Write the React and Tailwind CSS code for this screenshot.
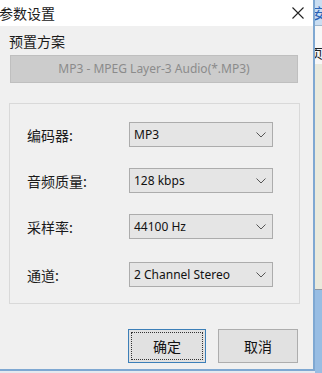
import React from 'react';

const cjk = { fontFamily: '"Noto Sans CJK SC", "Noto Sans", sans-serif' };
const latin = { fontFamily: '"Noto Sans", "Noto Sans CJK SC", sans-serif' };

function Chevron() {
  return (
    <svg width="10" height="6" viewBox="0 0 10 6" className="shrink-0">
      <path d="M0.5 0.5 L5 5 L9.5 0.5" fill="none" stroke="#555" strokeWidth="1" />
    </svg>
  );
}

function Field({ label, value, className }) {
  return (
    <div className={`flex items-center h-[25px] ${className}`}>
      <div className="w-[102px] text-[14px] text-[#1b1b1b] leading-[20px]" style={cjk}>{label}</div>
      <div className="w-[144px] h-[25px] bg-[#e5e5e5] border border-[#acacac] flex items-center justify-between pl-[4px] pr-[6px]">
        <span className="text-[12px] text-[#111]" style={latin}>{value}</span>
        <Chevron />
      </div>
    </div>
  );
}

export default function App() {
  return (
    <div className="w-[322px] h-[373px] overflow-hidden flex bg-[#e6e9ef]">
      {/* dialog */}
      <div className="w-[315px] h-[371px] flex flex-col border-r-2 border-b-2 border-[#7fa8d2] shrink-0">
        <div className="h-[26px] bg-white flex items-center justify-between shrink-0">
          <span className="text-[14px] text-[#202020] -ml-[1px]" style={cjk}>参数设置</span>
          <svg width="12" height="12" viewBox="0 0 12 12" className="mr-[9px]">
            <path d="M0.5 0.5 L11.5 11.5 M11.5 0.5 L0.5 11.5" stroke="#222" strokeWidth="1.1" />
          </svg>
        </div>
        <div className="flex-1 bg-[#f0f0f0] pl-[9px] pt-[5px]">
          <div className="text-[14px] text-[#1b1b1b] leading-[20px]" style={cjk}>预置方案</div>
          <div className="mt-[4px] ml-[1px] w-[288px] h-[28px] bg-[#cccccc] border border-[#bfbfbf] flex items-center justify-center">
            <span className="text-[12px] text-[#8b8b8b]" style={latin}>MP3 - MPEG Layer-3 Audio(*.MP3)</span>
          </div>
          <div className="mt-[20px] w-[291px] h-[201px] border border-[#d9d9d9] pl-[17px] pt-[18px]">
            <Field label="编码器:" value="MP3" />
            <Field label="音频质量:" value="128 kbps" className="mt-[21px]" />
            <Field label="采样率:" value="44100 Hz" className="mt-[21px]" />
            <Field label="通道:" value="2 Channel Stereo" className="mt-[23px]" />
          </div>
          <div className="mt-[25px] flex pl-[119px] gap-[12px]">
            <div className="w-[78px] h-[34px] bg-[#e1e1e1] border border-[#3c7fb8] p-[2px]">
              <div className="w-full h-full border border-dotted border-[#333] flex items-center justify-center">
                <span className="text-[14px] text-[#111]" style={cjk}>确定</span>
              </div>
            </div>
            <div className="w-[80px] h-[34px] bg-[#e1e1e1] border border-[#adadad] flex items-center justify-center">
              <span className="text-[14px] text-[#111]" style={cjk}>取消</span>
            </div>
          </div>
        </div>
      </div>
      {/* background window strip */}
      <div className="flex-1 flex flex-col overflow-hidden">
        <div className="h-[26px] bg-[#c9ddf1] border-b border-[#9fb6cc] overflow-hidden shrink-0">
          <span className="block text-[15px] text-[#2a63b8] leading-[26px] -ml-[3px]" style={cjk}>安</span>
        </div>
        <div className="h-[38px] bg-[#f7f7f7] overflow-hidden shrink-0">
          <span className="block text-[13px] text-[#222] leading-[14px] mt-[20px] -ml-[5px]" style={cjk}>页</span>
        </div>
        <div className="h-[226px] bg-[#e9e9dc] border-b border-[#8f98a3] shrink-0" />
        <div className="flex-1 bg-[#98bde3]" />
      </div>
    </div>
  );
}
